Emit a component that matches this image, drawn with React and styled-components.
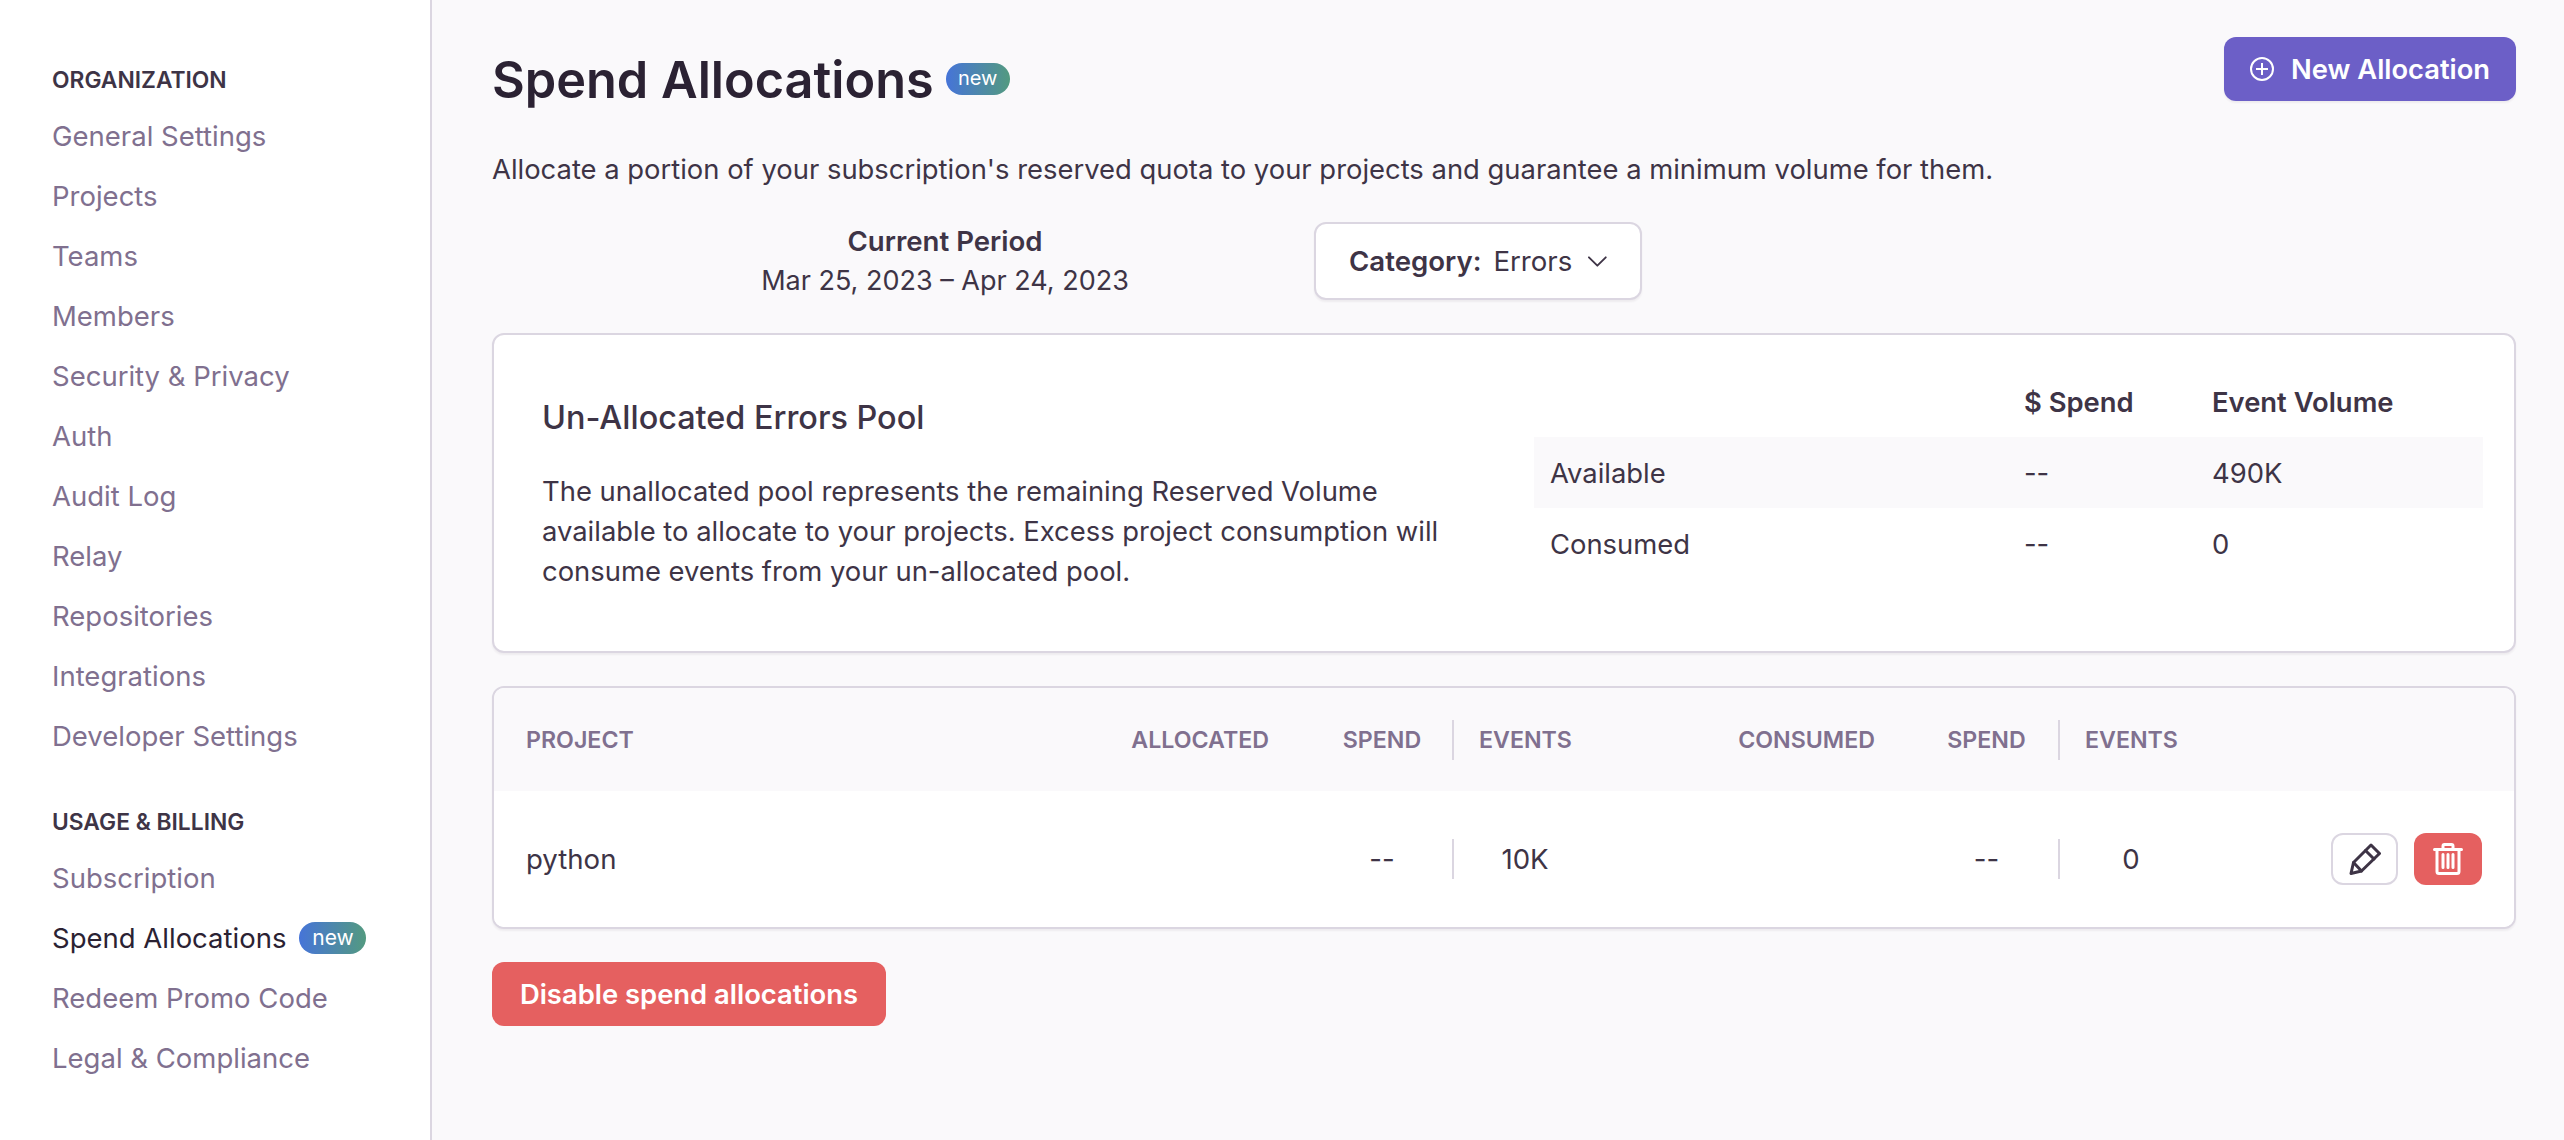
import React from 'react'
import styled, { createGlobalStyle } from 'styled-components'

const GlobalStyle = createGlobalStyle`
  html, body {
    margin: 0;
    padding: 0;
    height: 100%;
    background: #faf9fb;
    font-family: Inter, "Liberation Sans", sans-serif;
    color: #3e3446;
  }
  #root { height: 100%; }
  * { box-sizing: border-box; }
`

const Layout = styled.div`
  display: flex;
  width: 2564px;
  height: 1140px;
  overflow: hidden;
`

const Sidebar = styled.nav`
  width: 432px;
  flex-shrink: 0;
  background: #fff;
  border-right: 2px solid #dbd6e1;
  padding: 62px 0 0 52px;
`

const NavTitle = styled.div`
  font-size: 22.8px;
  line-height: 36px;
  font-weight: 600;
  color: #3e3446;
  margin-top: ${props => props.$first ? '0' : '38px'};
  margin-bottom: 8px;
`

const NavItem = styled.div`
  display: flex;
  align-items: center;
  height: 60px;
  font-size: 27.5px;
  color: ${props => props.$active ? '#2b2233' : '#80708f'};
`

const Badge = styled.span`
  display: inline-flex;
  align-items: center;
  justify-content: center;
  width: 67px;
  height: 32px;
  margin-left: 13px;
  border-radius: 16px;
  background: linear-gradient(90deg, #4674d8, #539a80);
  color: #fff;
  font-size: 21px;
  font-weight: 400;
  padding-bottom: 2px;
`

const TitleBadge = styled(Badge)`
  width: 64px;
  margin-left: 12px;
  font-size: 20px;
`

const Main = styled.main`
  flex: 1;
  padding: 37px 48px 0 60px;
`

const Header = styled.div`
  display: flex;
  justify-content: space-between;
  align-items: flex-start;
  height: 64px;
`

const Title = styled.h1`
  display: flex;
  align-items: center;
  margin: 0;
  height: 84px;
  font-size: 50.4px;
  font-weight: 600;
  color: #2b2233;
`

const PrimaryButton = styled.button`
  display: flex;
  align-items: center;
  gap: 17px;
  height: 64px;
  padding: 0 26px;
  border: none;
  border-radius: 12px;
  background: #6c5fc7;
  color: #fff;
  font: 600 27.3px Inter, sans-serif;
  box-shadow: 0 2px 2px rgba(43, 34, 51, 0.06);
`

const Description = styled.p`
  margin: 48px 0 0;
  font-size: 27.4px;
  line-height: 40px;
  color: #3e3446;
`

const PeriodRow = styled.div`
  display: flex;
  align-items: center;
  margin-top: 33px;
  height: 78px;
`

const Period = styled.div`
  width: 822px;
  padding-left: 84px;
  text-align: center;
  font-size: 27px;
  line-height: 39px;
  color: #3e3446;
  strong { display: block; font-size: 27.6px; font-weight: 600; }
`

const CategoryButton = styled.button`
  display: flex;
  align-items: center;
  height: 78px;
  width: 328px;
  padding: 0 33px;
  border: 2px solid #dbd6e1;
  border-radius: 12px;
  background: #fff;
  color: #3e3446;
  font: 400 27.6px Inter, sans-serif;
  box-shadow: 0 2px 2px rgba(43, 34, 51, 0.06);
  b { font-weight: 600; margin-right: 12px; }
  svg { margin-left: 16px; }
`

const Card = styled.section`
  background: #fff;
  border: 2px solid #dbd6e1;
  border-radius: 12px;
  box-shadow: 0 2px 2px rgba(43, 34, 51, 0.06);
  overflow: hidden;
`

const PoolCard = styled(Card)`
  display: flex;
  margin-top: 33px;
  height: 320px;
  padding: 0 31px 0 48px;
`

const PoolText = styled.div`
  width: 992px;
  padding-top: 62px;
`

const PoolTitle = styled.h2`
  margin: 0 0 32px;
  font-size: 32.4px;
  line-height: 42px;
  font-weight: 500;
  color: #3e3446;
`

const PoolBody = styled.p`
  margin: 0;
  max-width: 915px;
  font-size: 27.4px;
  line-height: 40px;
  color: #3e3446;
`

const PoolStats = styled.div`
  flex: 1;
  padding-top: 31px;
`

const StatRow = styled.div`
  display: grid;
  grid-template-columns: 474px 188px 1fr;
  align-items: center;
  height: 71px;
  padding-left: 16px;
  font-size: 27.4px;
  font-weight: ${props => props.$head ? 600 : 400};
  background: ${props => props.$shaded ? '#faf9fb' : 'transparent'};
  color: #3e3446;
`

const TableCard = styled(Card)`
  margin-top: 33px;
  height: 243px;
`

const TableHead = styled.div`
  display: grid;
  grid-template-columns: 574px 169px 185px 246px 175px 185px 159px 1fr;
  align-items: center;
  height: 103px;
  padding: 0 32px;
  background: #faf9fb;
  color: #80708f;
  font-size: 23.2px;
  font-weight: 600;
`

const TableRow = styled(TableHead)`
  height: 136px;
  background: #fff;
  color: #3e3446;
  font-size: 27.6px;
  font-weight: 400;
`

const RightCell = styled.div`
  text-align: right;
`

const SpendCell = styled.div`
  display: flex;
  align-items: center;
  justify-content: center;
  height: 40px;
  padding-left: ${props => props.$pad}px;
  border-right: 2px solid #dbd6e1;
`

const EventsCell = styled.div`
  width: 117px;
  padding-left: 25px;
  text-align: center;
`

const Actions = styled.div`
  display: flex;
  justify-content: flex-end;
  gap: 16px;
`

const IconButton = styled.button`
  display: flex;
  align-items: center;
  justify-content: center;
  width: ${props => props.$danger ? '68px' : '67px'};
  height: 52px;
  padding: 0;
  border: ${props => props.$danger ? 'none' : '2px solid #dbd6e1'};
  border-radius: 12px;
  background: ${props => props.$danger ? '#e56060' : '#fff'};
`

const DangerButton = styled.button`
  display: block;
  margin-top: 33px;
  height: 64px;
  width: 394px;
  border: none;
  border-radius: 12px;
  background: #e56060;
  color: #fff;
  font: 600 27.4px Inter, sans-serif;
`

const PlusIcon = () => (
  <svg width="24" height="24" viewBox="0 0 24 24" fill="none" stroke="#fff" strokeWidth="2">
    <circle cx="12" cy="12" r="11" />
    <path d="M12 6v12M6 12h12" />
  </svg>
)

const ChevronIcon = () => (
  <svg width="20" height="11" viewBox="0 0 20 11" fill="none" stroke="#3e3446" strokeWidth="2" strokeLinecap="round" strokeLinejoin="round">
    <path d="M1 1l9 9 9-9" />
  </svg>
)

const PencilIcon = () => (
  <svg width="32" height="32" viewBox="0 0 32 32" fill="none" stroke="#3e3446" strokeWidth="3" strokeLinejoin="round" strokeLinecap="round">
    <path d="M22 2L30.500 10.500L12.500 28L2 30.500L4.500 19.500Z" />
    <path d="M4.500 19.500L12.500 28M16.500 7.500L25 16" />
  </svg>
)

const TrashIcon = () => (
  <svg width="30" height="32" viewBox="0 0 30 32" fill="none" stroke="#fff" strokeWidth="3" strokeLinejoin="round" strokeLinecap="round">
    <path d="M1.500 6.500h27M10 6.500V3Q10 1.500 11.500 1.500h7Q20 1.500 20 3V6.500" />
    <path d="M4 6.500v22q0 2 2 2h18q2 0 2-2v-22" />
    <path d="M10 11.500v13M15 11.500v13M20 11.500v13" />
  </svg>
)

const orgItems = ['General Settings', 'Projects', 'Teams', 'Members', 'Security & Privacy', 'Auth', 'Audit Log', 'Relay', 'Repositories', 'Integrations', 'Developer Settings']

const App = () => {
  return (
    <Layout>
      <GlobalStyle />
      <Sidebar>
        <NavTitle $first>ORGANIZATION</NavTitle>
        {orgItems.map(item => <NavItem key={item}>{item}</NavItem>)}
        <NavTitle>USAGE &amp; BILLING</NavTitle>
        <NavItem>Subscription</NavItem>
        <NavItem $active>Spend Allocations<Badge>new</Badge></NavItem>
        <NavItem>Redeem Promo Code</NavItem>
        <NavItem>Legal &amp; Compliance</NavItem>
      </Sidebar>
      <Main>
        <Header>
          <Title>Spend Allocations<TitleBadge>new</TitleBadge></Title>
          <PrimaryButton><PlusIcon />New Allocation</PrimaryButton>
        </Header>
        <Description>Allocate a portion of your subscription's reserved quota to your projects and guarantee a minimum volume for them.</Description>
        <PeriodRow>
          <Period><strong>Current Period</strong>Mar 25, 2023 – Apr 24, 2023</Period>
          <CategoryButton><b>Category:</b>Errors<ChevronIcon /></CategoryButton>
        </PeriodRow>
        <PoolCard>
          <PoolText>
            <PoolTitle>Un-Allocated Errors Pool</PoolTitle>
            <PoolBody>The unallocated pool represents the remaining Reserved Volume available to allocate to your projects. Excess project consumption will consume events from your un-allocated pool.</PoolBody>
          </PoolText>
          <PoolStats>
            <StatRow $head><span /><span>$ Spend</span><span>Event Volume</span></StatRow>
            <StatRow $shaded><span>Available</span><span>--</span><span>490K</span></StatRow>
            <StatRow><span>Consumed</span><span>--</span><span>0</span></StatRow>
          </PoolStats>
        </PoolCard>
        <TableCard>
          <TableHead>
            <div>PROJECT</div>
            <RightCell>ALLOCATED</RightCell>
            <SpendCell $pad={43}>SPEND</SpendCell>
            <EventsCell>EVENTS</EventsCell>
            <RightCell>CONSUMED</RightCell>
            <SpendCell $pad={40}>SPEND</SpendCell>
            <EventsCell>EVENTS</EventsCell>
          </TableHead>
          <TableRow>
            <div>python</div>
            <RightCell />
            <SpendCell $pad={43}>--</SpendCell>
            <EventsCell>10K</EventsCell>
            <RightCell />
            <SpendCell $pad={40}>--</SpendCell>
            <EventsCell>0</EventsCell>
            <Actions>
              <IconButton><PencilIcon /></IconButton>
              <IconButton $danger><TrashIcon /></IconButton>
            </Actions>
          </TableRow>
        </TableCard>
        <DangerButton>Disable spend allocations</DangerButton>
      </Main>
    </Layout>
  )
}

export default App
